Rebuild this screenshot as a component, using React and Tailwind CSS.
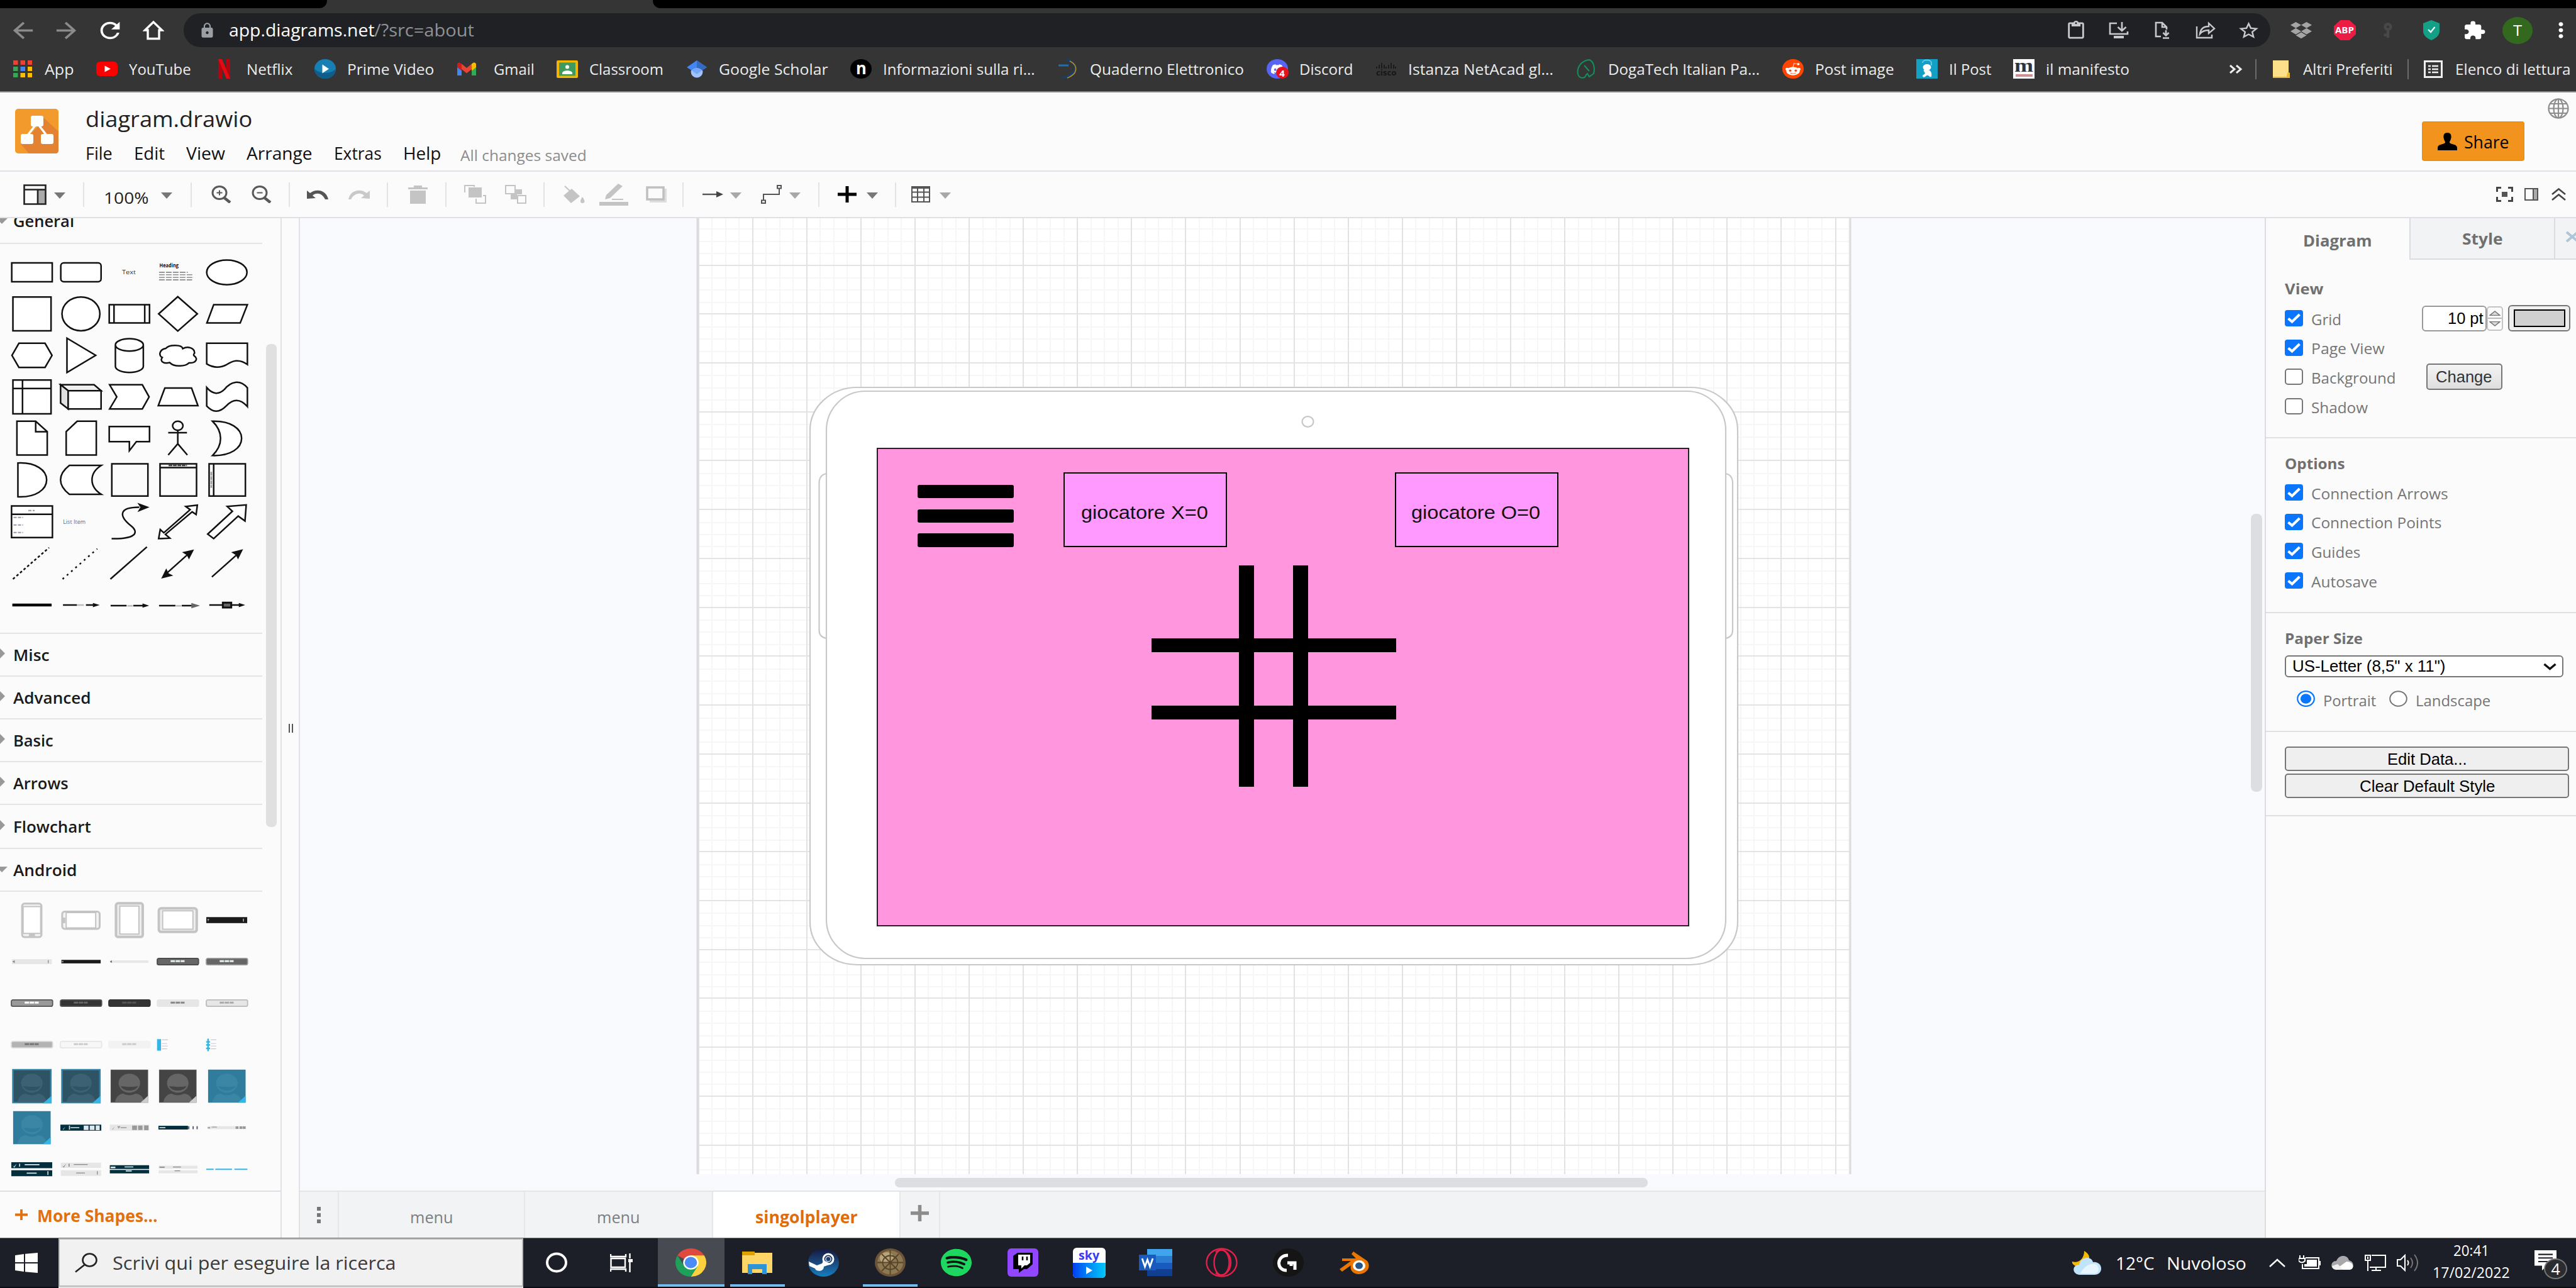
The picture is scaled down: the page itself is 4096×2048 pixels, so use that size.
import React, { useLayoutEffect, useRef, useState } from "react";
import { FaDiscord, FaRedditAlien, FaSpotify, FaDropbox } from "react-icons/fa";
import {
  MdArrowBack, MdArrowForward, MdRefresh, MdLock, MdStarOutline, MdExtension, MdMoreVert,
  MdOutlineContentPaste, MdVpnKey,
} from "react-icons/md";

/* Single line of text stretched horizontally to an exact width. */
function T({ w, children, className = "" }) {
  const ref = useRef(null);
  const [k, setK] = useState(1);
  useLayoutEffect(() => {
    setK(w / ref.current.offsetWidth);
  }, [w, children]);
  return (
    <span className={"block shrink-0 whitespace-nowrap " + className} style={{ width: w }}>
      <span ref={ref} className="inline-block origin-left" style={{ transform: `scaleX(${k})` }}>
        {children}
      </span>
    </span>
  );
}

const Svg = ({ box = "0 0 24 24", className, children, ...r }) => (
  <svg viewBox={box} preserveAspectRatio="none" fill="none" className={"shrink-0 " + className} {...r}>
    {children}
  </svg>
);

/* ------------------------------ browser chrome ------------------------------ */

const Slot = ({ children }) => <div className="flex w-[68.75px] shrink-0 items-center justify-center">{children}</div>;

function AddressBar() {
  return (
    <div className="flex h-[70px] shrink-0 items-center">
      <div className="flex w-[292px] shrink-0 items-center pl-[2px] text-white">
        <div className="flex w-[69px] justify-center"><MdArrowBack preserveAspectRatio="none" className="h-[41px] w-[47px] text-[#8b8b8b]" /></div>
        <div className="flex w-[69px] justify-center"><MdArrowForward preserveAspectRatio="none" className="h-[41px] w-[47px] text-[#8b8b8b]" /></div>
        <div className="flex w-[69px] justify-center"><MdRefresh preserveAspectRatio="none" className="h-[41px] w-[46px]" /></div>
        <div className="flex w-[69px] justify-center">
          <Svg className="h-[32px] w-[34px]" box="0 0 34 32"><path d="M17 3 L3.5 16 H8 V29.5 H26 V16 H30.5 Z" stroke="#fff" strokeWidth="3.4" /></Svg>
        </div>
      </div>
      <div className="flex h-[54px] w-[3318px] shrink-0 items-center rounded-[27px] bg-[#202124] pl-[24px]">
        <MdLock preserveAspectRatio="none" className="h-[27px] w-[27px] shrink-0 text-[#9aa0a6]" />
        <T w={231} className="ml-[21px] text-[27px] leading-[40px] text-white">app.diagrams.net</T>
        <T w={159} className="text-[27px] leading-[40px] text-[#8f9296]">/?src=about</T>
        <div className="ml-auto flex text-[#c7c9cc]">
          <Slot><MdOutlineContentPaste preserveAspectRatio="none" className="h-[31px] w-[34px]" /></Slot>
          <Slot>
            <Svg className="h-[28px] w-[34px]" box="0 0 34 28" stroke="currentColor" strokeWidth="2.6">
              <path d="M14 3 H3 V20 H31 V16 M22 1 V14 M15.5 9 L22 15 L28.500 9" /><path d="M9 23 H25 V27 H9Z" fill="currentColor" stroke="none" />
            </Svg>
          </Slot>
          <Slot>
            <Svg className="h-[28px] w-[28px]" box="0 0 28 28" stroke="currentColor" strokeWidth="2.6">
              <path d="M12 24 H4 V2 H14 L21 9 V13 M14 2 V9 H21 M20 14 V22 M15.500 18 L20 22.500 L24.500 18 M15 26.500 H25" />
            </Svg>
          </Slot>
          <Slot>
            <Svg className="h-[28px] w-[34px]" box="0 0 34 28" stroke="currentColor" strokeWidth="2.4">
              <path d="M3 8 V26 H27 V21 M8 20 C9 12 14 8 22 8 V3 L31 11.500 L22 19 V14 C15 14 11 16 8 20Z" />
            </Svg>
          </Slot>
          <Slot><MdStarOutline preserveAspectRatio="none" className="h-[33px] w-[37px]" /></Slot>
        </div>
      </div>
      <div className="ml-[15px] flex shrink-0 items-center">
        <Slot><FaDropbox preserveAspectRatio="none" className="h-[30px] w-[34px] text-[#a5a5a5]" /></Slot>
        <Slot>
          <div className="relative flex h-[32px] w-[35px] items-center justify-center">
            <Svg className="absolute inset-0 h-full w-full" box="0 0 34 32"><path d="M10 0 H24 L34 9.500 V22.500 L24 32 H10 L0 22.500 V9.500Z" fill="#ed1c45" /></Svg>
            <T w={30} className="relative text-[14px] font-bold leading-[20px] text-white">ABP</T>
          </div>
        </Slot>
        <Slot><MdVpnKey className="h-[26px] w-[26px] rotate-90 text-[#484848]" /></Slot>
        <Slot>
          <Svg className="h-[32px] w-[26px]" box="0 0 26 32"><path d="M13 0 L26 5 V18 C26 25 18 30 13 32 C8 30 0 25 0 18 V5Z" fill="#14a087" /><path d="M8 15 l4 4 l6.500 -8" stroke="#fff" strokeWidth="2.200" /></Svg>
        </Slot>
        <Slot><MdExtension preserveAspectRatio="none" className="h-[33px] w-[37px] text-white" /></Slot>
        <Slot>
          <div className="flex h-[43px] w-[48px] items-center justify-center rounded-[50%] bg-[#33691e]"><T w={14} className="text-[24px] leading-[30px] text-white">T</T></div>
        </Slot>
        <Slot><MdMoreVert preserveAspectRatio="none" className="h-[38px] w-[42px] text-white" /></Slot>
      </div>
    </div>
  );
}

const I = "h-[31px] w-[34px]";
const icons = {
  apps: (
    <Svg className="h-[27px] w-[30px]" box="0 0 30 27">
      {["#ea4335", "#ea4335", "#ea4335", "#34a853", "#4285f4", "#fbbc05", "#34a853", "#fbbc05", "#fbbc05"].map((c, i) => (
        <rect key={i} x={(i % 3) * 11.5} y={Math.floor(i / 3) * 10} width="7.500" height="7" fill={c} />
      ))}
    </Svg>
  ),
  yt: <Svg className="h-[23px] w-[34px]" box="0 0 34 23"><rect width="34" height="23" rx="6" fill="#f00" /><path d="M13.500 6.500 L23 11.500 L13.500 16.500Z" fill="#fff" /></Svg>,
  netflix: <Svg className="h-[31px] w-[19px]" box="0 0 19 31"><path d="M0 0H6V31H0ZM13 0H19V31H13Z" fill="#b1060f" /><path d="M0 0H6L19 31H13Z" fill="#e50914" /></Svg>,
  prime: <Svg className={I} box="0 0 34 31"><ellipse cx="17" cy="15.500" rx="17" ry="15.500" fill="#1680b5" /><path d="M0 15.500 A17 15.500 0 0 0 34 15.500 C26 24 8 24 0 15.500Z" fill="#0f5d8a" /><path d="M12.500 8.500 L23 15.500 L12.500 22.500Z" fill="#fff" /></Svg>,
  gmail: <Svg className="h-[21px] w-[30px]" box="0 0 30 21"><path d="M0 3V21H7V9Z" fill="#4285f4" /><path d="M30 3V21H23V9Z" fill="#34a853" /><path d="M23 2.500 L26 0.500 Q30 0 30 4 V8 L23 13.500Z" fill="#fbbc04" /><path d="M7 2.500 L4 0.500 Q0 0 0 4 V8 L7 13.500Z" fill="#c5221f" /><path d="M7 2.500 L15 9 L23 2.500 V11 L15 17.500 L7 11Z" fill="#ea4335" /></Svg>,
  classroom: <Svg className="h-[28px] w-[34px]" box="0 0 34 28"><rect width="34" height="28" rx="2" fill="#f4b400" /><rect x="4" y="3.500" width="26" height="21" fill="#3f9b5b" /><circle cx="17" cy="10.500" r="3" fill="#fff" /><path d="M9 20 C10 15 24 15 25 20 V22 H9Z" fill="#fff" /></Svg>,
  scholar: <Svg className={I} box="0 0 34 31"><circle cx="17" cy="20" r="9.500" fill="#a0c3ff" /><path d="M17 2 L33 13 L25 18 C22 13 12 13 9 18 L1 13Z" fill="#4285f4" /><path d="M17 2 L33 13 L25 18 C23 15 20 14 17 14Z" fill="#356ac3" /><path d="M9 18 C12 13 22 13 25 18 L17 24Z" fill="#76a7fa" /></Svg>,
  nn: (
    <div className={"flex items-center justify-center rounded-[50%] bg-black " + I}><T w={17} className="-mt-[4px] text-[27px] font-bold leading-[28px] text-white">n</T></div>
  ),
  quad: <Svg className={I} box="0 0 34 31"><path d="M2 10 H18" stroke="#1f6fae" strokeWidth="3" /><path d="M14 1 C34 6 34 24 8 30" stroke="#1c3d66" strokeWidth="3.500" /><path d="M20 3 C35 11 32 24 16 30" stroke="#b08d2e" strokeWidth="1.600" /></Svg>,
  discord: (
    <div className={"relative flex items-center justify-center rounded-[50%] bg-[#5865f2] " + I}>
      <FaDiscord className="h-[20px] w-[22px] text-white" />
      <div className="absolute -right-[1px] bottom-0 flex h-[19px] w-[20px] items-center justify-center rounded-[50%] bg-[#e8101c]"><T w={9} className="text-[15px] font-bold leading-[18px] text-white">4</T></div>
    </div>
  ),
  cisco: (
    <div className="flex w-[34px] flex-col items-center">
      <Svg className="h-[12px] w-[32px]" box="0 0 32 12"><path d="M1 7v3M5 4v6M9 1v9M13 4v6M16 7v3M20 4v6M24 1v9M28 4v6M31 7v3" stroke="#161616" strokeWidth="1.600" /></Svg>
      <T w={32} className="text-[12px] font-bold leading-[10px] text-[#161616]">cisco</T>
    </div>
  ),
  doga: <Svg className={I} box="0 0 34 31"><path d="M22 1 C8 3 2 14 4 24 C6 31 15 32 17 25 L19 23 L22 28 L29 23 C31 16 30 4 22 1 M14 10 L22 19" stroke="#13915a" strokeWidth="2" /></Svg>,
  reddit: <div className={"flex items-center justify-center rounded-[50%] bg-[#ff4500] " + I}><FaRedditAlien preserveAspectRatio="none" className="h-[22px] w-[26px] text-white" /></div>,
  ilpost: <Svg className={I} box="0 0 34 31"><rect width="34" height="31" fill="#149fc5" /><path d="M10 6 C10 0 24 0 24 6 V10" stroke="#7fd0e6" strokeWidth="1.600" /><ellipse cx="17" cy="13" rx="6.500" ry="5" fill="#fff" /><path d="M12 17 C20 15 26 19 24 28 C20 30 20 22 14 28 C10 30 9 26 11 25 C18 22 10 20 12 17Z" fill="#fff" /></Svg>,
  manif: (
    <div className={"flex items-center justify-center bg-white " + I}><div className="flex flex-col items-center"><T w={30} className="-mt-[8px] font-['Liberation_Serif'] text-[30px] leading-[28px] font-bold text-[#333]">m</T><div className="h-[4px] w-[27px] bg-[#cf8f8f]" /></div></div>
  ),
};

const bookmarks = [
  ["apps", "App", 47], ["yt", "YouTube", 99], ["netflix", "Netflix", 73], ["prime", "Prime Video", 138],
  ["gmail", "Gmail", 65], ["classroom", "Classroom", 118], ["scholar", "Google Scholar", 174],
  ["nn", "Informazioni sulla ri...", 242], ["quad", "Quaderno Elettronico", 245], ["discord", "Discord", 86],
  ["cisco", "Istanza NetAcad gl...", 231], ["doga", "DogaTech Italian Pa...", 241], ["reddit", "Post image", 126],
  ["ilpost", "Il Post", 67], ["manif", "il manifesto", 133],
];

function Bookmarks() {
  const txt = "text-[23.5px] leading-[32px] text-[#ececec]";
  return (
    <div className="flex h-[53px] shrink-0 items-center pl-[19px]">
      <div className="flex shrink-0 items-center gap-[35.3px]">
        {bookmarks.map(([ic, label, w]) => (
          <div key={label} className={"flex shrink-0 items-center " + (ic === "gmail" ? "gap-[26px]" : "gap-[18px]")}>
            <div className="flex w-[34px] shrink-0 justify-center">{icons[ic]}</div>
            <T w={w} className={txt}>{label}</T>
          </div>
        ))}
      </div>
      <div className="ml-auto flex shrink-0 items-center">
        <Svg className="h-[14px] w-[21px]" box="0 0 21 14" stroke="#eee" strokeWidth="3"><path d="M1 1 L8 7 L1 13 M11 1 L18 7 L11 13" /></Svg>
        <div className="ml-[20px] h-[32px] w-[2px] bg-[#6b6b6b]" />
        <Svg className="ml-[26px] h-[28px] w-[27px]" box="0 0 27 28"><path d="M0 0H25V20H27V28H0Z" fill="#ffe08a" /><path d="M24 18 L27 20 V28 H21Z" fill="#e8bb2e" /><path d="M0 26H27V28H0Z" fill="#e0b840" /></Svg>
        <T w={143} className={"ml-[21px] " + txt}>Altri Preferiti</T>
        <div className="ml-[23px] h-[32px] w-[2px] bg-[#6b6b6b]" />
        <Svg className="ml-[24px] h-[28px] w-[30px]" box="0 0 30 28" stroke="#eee"><rect x="1.500" y="1.500" width="27" height="25" strokeWidth="3" /><path d="M7 9h4M13 9h10M7 14h4M13 14h10M7 19h4M13 19h10" strokeWidth="2.600" /></Svg>
        <T w={183} className={"ml-[20px] mr-[9px] " + txt}>Elenco di lettura</T>
      </div>
    </div>
  );
}

function Browser() {
  return (
    <div className="flex h-[147px] shrink-0 flex-col border-b-2 border-[#8a8a8a] bg-[#353535]">
      <div className="flex h-[13px] shrink-0 justify-between">
        <div className="w-[520px] rounded-br-[12px] bg-black" />
        <div className="w-[3058px] rounded-bl-[12px] bg-black" />
      </div>
      <AddressBar />
      <Bookmarks />
    </div>
  );
}

/* ------------------------------ app header + toolbar ------------------------------ */

function Header() {
  const m = "text-[27px] leading-[36px] text-[#111]";
  return (
    <div className="flex h-[126px] shrink-0 border-b-2 border-[#dfe0e6] bg-[#fbfbfb]">
      <Svg className="ml-[24px] mt-[26px] h-[71px] w-[69px]" box="0 0 69 71">
        <rect width="69" height="71" rx="5" fill="#f29a2c" />
        <path d="M43 12 L69 36 V66 Q69 71 64 71 H22 L9 56 L35 30Z" fill="#e38331" />
        <path d="M34 24 L20 42 M36 24 L50 42" stroke="#fff" strokeWidth="3.500" />
        <rect x="25" y="11" width="20" height="17" rx="3" fill="#fff" /><rect x="9" y="40" width="20" height="16" rx="3" fill="#fff" /><rect x="41" y="40" width="20" height="16" rx="3" fill="#fff" />
      </Svg>
      <div className="ml-[43px] flex flex-col">
        <T w={265} className="mt-[20px] text-[35px] leading-[44px] text-[#222]">diagram.drawio</T>
        <div className="mt-[15px] flex gap-[34px]">
          <T w={43} className={m}>File</T>
          <T w={49} className={m}>Edit</T>
          <T w={62} className={m}>View</T>
          <T w={105} className={m}>Arrange</T>
          <T w={76} className={m}>Extras</T>
          <T w={60} className={m}>Help</T>
          <T w={201} className="-ml-[3px] mt-[3px] text-[23.5px] leading-[36px] text-[#8c8c8c]">All changes saved</T>
        </div>
      </div>
      <div className="ml-auto flex">
        <div className="mt-[46px] flex h-[63px] w-[163px] items-center rounded-[4px] border-2 border-[#ee8f12] bg-[#f2931e] pl-[23px]">
          <Svg className="h-[28px] w-[31px]" box="0 0 31 28"><path d="M15.500 0 C21 0 22 4 21.500 8 C21 12 19 13 19 16 C22 19 31 18 31 24 V28 H0 V24 C0 18 9 19 12 16 C12 13 10 12 9.500 8 C9 4 10 0 15.500 0Z" fill="#000" /></Svg>
          <T w={72} className="ml-[11px] mt-[2px] text-[27px] font-medium leading-[36px] text-black">Share</T>
        </div>
        <Svg className="ml-[37px] mr-[11px] mt-[9px] h-[33px] w-[34px]" box="0 0 34 33" stroke="#8d8d8d" strokeWidth="2.200">
          <ellipse cx="17" cy="16.500" rx="15.500" ry="15" /><ellipse cx="17" cy="16.500" rx="7.500" ry="15" /><path d="M17 1V32M2 16.500H32M4 9H30M4 24H30" />
        </Svg>
      </div>
    </div>
  );
}

const Sep = ({ className }) => <div className={"h-[39px] w-[2px] shrink-0 bg-[#e3e3e3] " + className} />;
const Caret = ({ className = "", c = "#777" }) => <Svg className={"h-[10px] w-[18px] " + className} box="0 0 18 10"><path d="M0 0H18L9 10Z" fill={c} /></Svg>;

function Zoom({ plus, className }) {
  return (
    <Svg className={"h-[28px] w-[32px] " + className} box="0 0 32 28" stroke="#595959">
      <ellipse cx="13" cy="11.500" rx="11" ry="10" strokeWidth="3" />
      <path d={plus ? "M8.500 11.500H17.500M13 7.500V15.500" : "M8.500 11.500H17.500"} strokeWidth="2" />
      <path d="M20 19L30 27" strokeWidth="4.500" />
    </Svg>
  );
}

function Toolbar() {
  return (
    <div className="flex h-[74px] shrink-0 items-center border-b-2 border-[#dfe0e6] bg-[#fbfbfb]">
      <Svg className="ml-[37px] h-[33px] w-[37px]" box="0 0 37 33"><path d="M24 9H35V31H24Z" fill="#aaa" /><path d="M1.500 1.500H35.500V31.500H1.500ZM1.500 8.500H35.500M23 9V31" stroke="#222" strokeWidth="2.600" /></Svg>
      <Caret className="ml-[12px] mt-[4px]" />
      <Sep className="ml-[28px]" />
      <T w={72} className="ml-[31px] mt-[9px] text-[25px] leading-[34px] text-[#222]">100%</T>
      <Caret className="ml-[19px] mt-[4px]" />
      <Sep className="ml-[29px]" />
      <Zoom plus className="ml-[31px]" />
      <Zoom className="ml-[32px]" />
      <Sep className="ml-[27px]" />
      <Svg className="ml-[27px] h-[17px] w-[34px]" box="0 0 34 17"><path d="M0 2V15L14 14L9 10C14 5 24 5 29 16H34C31 1 15 -2 5 6Z" fill="#555" /></Svg>
      <Svg className="ml-[32px] h-[17px] w-[34px]" box="0 0 34 17"><path d="M34 2V15L20 14L25 10C20 5 10 5 4 16H0C3 1 19 -2 29 6Z" fill="#c9c9c9" /></Svg>
      <Sep className="ml-[27px]" />
      <Svg className="ml-[32px] h-[29px] w-[31px]" box="0 0 31 29"><path d="M0 3H9V0H22V3H31V6H0ZM3 8H28V29H3Z" fill="#c4c4c4" /></Svg>
      <Sep className="ml-[28px]" />
      <Svg className="ml-[28px] h-[30px] w-[35px]" box="0 0 35 30"><rect x="7" y="4" width="21" height="16" fill="#c4c4c4" /><path d="M1 12V1H16V3M30 17H34V29H19V22" stroke="#c4c4c4" strokeWidth="2" /></Svg>
      <Svg className="ml-[30px] h-[30px] w-[35px]" box="0 0 35 30"><path d="M1 1H16V14H1ZM20 17H33V29H20Z" stroke="#c4c4c4" strokeWidth="2" /><path d="M17 7H27V15H17ZM9 15H19V23H9Z" fill="#c4c4c4" /></Svg>
      <Sep className="ml-[26px]" />
      <Svg className="ml-[29px] h-[29px] w-[35px]" box="0 0 35 29"><path d="M3 1L16 13" stroke="#c4c4c4" strokeWidth="2" /><path d="M14 5L27 17L13 28L1 16Z M31 18C36 25 35 28 31 28C27 28 27 24 31 18Z" fill="#c4c4c4" /></Svg>
      <Svg className="ml-[23px] h-[35px] w-[46px]" box="0 0 46 35"><path d="M9 25L11 18L30 0L37 4L17 23ZM0 29H46V35H0ZM20 24H38V26H20Z" fill="#c4c4c4" /></Svg>
      <Svg className="ml-[28px] h-[26px] w-[33px]" box="0 0 33 26"><path d="M6 4H33V26H6Z" fill="#ddd" /><path d="M2 2H28V21H2Z" stroke="#c0c0c0" strokeWidth="3.500" fill="#fbfbfb" /></Svg>
      <Sep className="ml-[25px]" />
      <Svg className="ml-[30px] h-[12px] w-[33px]" box="0 0 33 12"><path d="M0 6H25" stroke="#555" strokeWidth="2.400" /><path d="M22 1L33 6L22 11Z" fill="#444" /></Svg>
      <Caret className="ml-[11px] mt-[4px]" c="#a8a8a8" />
      <Svg className="ml-[31px] h-[30px] w-[33px]" box="0 0 33 30" stroke="#555" strokeWidth="2"><path d="M4 24V15H29V6M1 24.500H7V29H1ZM26 1H32V5.500H26Z" /></Svg>
      <Caret className="ml-[12px] mt-[4px]" c="#a8a8a8" />
      <Sep className="ml-[28px]" />
      <Svg className="ml-[29px] h-[26px] w-[30px]" box="0 0 30 26"><path d="M15 0V26M0 13H30" stroke="#000" strokeWidth="5" /></Svg>
      <Caret className="ml-[16px] mt-[4px]" />
      <Sep className="ml-[27px]" />
      <Svg className="ml-[24px] h-[26px] w-[30px]" box="0 0 30 26" stroke="#555" strokeWidth="2"><path d="M1 1H29V25H1ZM1 3H29M1 9.500H29M1 17.500H29M10 1V25M20 1V25" /></Svg>
      <Caret className="ml-[15px] mt-[4px]" c="#a8a8a8" />
      <div className="ml-auto mr-[16px] flex items-center">
        <Svg className="h-[24px] w-[27px]" box="0 0 27 24" stroke="#444" strokeWidth="3"><path d="M1.500 8V1.500H8M19 1.500H25.500V8M25.500 16V22.500H19M8 22.500H1.500V16" /><rect x="9" y="8" width="9" height="8" fill="#555" stroke="none" /></Svg>
        <Svg className="ml-[18px] h-[20px] w-[22px]" box="0 0 22 20"><path d="M14 1H21V19H14Z" fill="#aaa" /><path d="M1 1H21V19H1ZM14 1V19" stroke="#555" strokeWidth="2" /></Svg>
        <Svg className="ml-[21px] h-[20px] w-[23px]" box="0 0 23 20" stroke="#444" strokeWidth="2.600"><path d="M1 10L11.500 1.500L22 10M1 19L11.500 10.500L22 19" /></Svg>
      </div>
    </div>
  );
}

/* ------------------------------ sidebar ------------------------------ */

const Poly = ({ p, f = "#fff", ...r }) => <polygon points={p} fill={f} vectorEffect="non-scaling-stroke" {...r} />;
const P = ({ d, f = "none", ...r }) => <path d={d} fill={f} vectorEffect="non-scaling-stroke" {...r} />;
const mini = { stroke: "none", fontFamily: "Open Sans" };

const general = [
  <P d="M-101 -35H102V35H-101Z" f="#fff" />,
  <rect x="-101" y="-35" width="202" height="70" rx="15" ry="11" fill="#fff" vectorEffect="non-scaling-stroke" />,
  <text x="-37" y="6" fontSize="20" textLength="69" lengthAdjust="spacingAndGlyphs" fill="#334" {...mini}>Text</text>,
  <g><text x="-92" y="-20" fontSize="20" fontWeight="bold" textLength="96" lengthAdjust="spacingAndGlyphs" fill="#112" {...mini}>Heading</text><P d="M-94 0H50M-94 9H78M-94 19H80M-94 28H72" stroke="#777" strokeWidth="1.400" strokeDasharray="9 2" /></g>,
  <P d="M-101 0A101 46 0 1 1 101 0A101 46 0 1 1 -101 0Z" f="#fff" />,
  <P d="M-95 -63H96V63H-95Z" f="#fff" />,
  <P d="M-95 0A95 63 0 1 1 95 0A95 63 0 1 1 -95 0Z" f="#fff" />,
  <P d="M-101 -34H101V34H-101ZM-77 -34V34M77 -34V34" f="#fff" />,
  <Poly p="0,-64 98,0 0,64 -96,0" />,
  <Poly p="-100,34 -66,-34 103,-34 67,34" />,
  <Poly p="-100,0 -65,-45 66,-45 101,0 66,45 -65,45" />,
  <Poly p="-70,-64 74,0 -70,64" />,
  <P d="M-70 -39A70 23 0 0 1 70 -39V41A70 23 0 0 1 -70 41ZM-70 -39A70 23 0 0 0 70 -39" f="#fff" />,
  <P d="M-60 -26C-45 -40 20 -42 25 -25C50 -36 85 -28 84 -8C78 -4 78 0 84 3C104 14 88 30 56 28C40 42 -20 44 -40 27C-70 33 -92 22 -78 8C-98 0 -92 -22 -60 -26Z" f="#fff" />,
  <P d="M-101 -45H103V34C60 10 25 22 0 34C-35 48 -70 46 -101 32Z" f="#fff" />,
  <P d="M-95 -63H96V63H-95ZM-95 -31H96M-47 -63V63" f="#fff" />,
  <g><Poly p="-102,-45 66,-45 101,-23 -64,-23" f="#f0f0f0" /><Poly p="-102,-45 -64,-23 -64,45 -102,23" f="#e0e0e0" /><P d="M-64 -23H101V45H-64Z" f="#fff" /></g>,
  <Poly p="-99,-45 65,-45 99,0 65,45 -99,45 -63,0" />,
  <Poly p="-98,33 -65,-33 69,-33 101,33" />,
  <P d="M-101 -35C-70 -8 -40 -8 -12 -28C20 -58 65 -66 103 -34V36C65 4 30 8 -2 33C-40 62 -70 58 -101 34Z" f="#fff" />,
  <P d="M-75 -64H19L77 -25V62H-75ZM19 -64V-25H77" f="#fff" />,
  <Poly p="-19,-64 77,-64 77,62 -74,62 -74,-25" />,
  <Poly p="-101,-44 101,-44 101,12 35,12 0,46 0,12 -101,12" />,
  <P d="M-26 -47A26 17 0 1 1 26 -47A26 17 0 1 1 -26 -47ZM0 -30V20M-48 -21H46M0 20L-48 62M0 20L48 62" />,
  <P d="M-72 -64C20 -66 74 -36 74 0S20 66 -72 64C-18 25 -18 -25 -72 -64Z" f="#fff" />,
  <P d="M-70 -63C20 -66 74 -36 74 0S20 66 -70 63Z" f="#fff" />,
  <P d="M-58 -54H102C40 -25 40 25 102 54H-58C-117 20 -117 -20 -58 -54Z" f="#fff" />,
  <P d="M-88 -60H93V60H-88Z" />,
  <g><P d="M-89 -60H94V60H-89ZM-89 -46H94" /><P d="M-46 -54H46" stroke="#444" strokeDasharray="6 1" /></g>,
  <g><P d="M-89 -60H93V60H-89ZM-66 -60V60" /><P d="M-78 -30V30" stroke="#999" strokeDasharray="6 1" /></g>,
  <g><P d="M-102 -60H103V58H-102Z" f="#fff" /><P d="M-102 -29H103" /><P d="M-18 -43H14M-92 -17H-44M-92 11H-44M-92 39H-44" stroke="#99a" strokeWidth="2" strokeDasharray="5 2" /></g>,
  <text x="-90" y="7" fontSize="20" textLength="113" lengthAdjust="spacingAndGlyphs" fill="#667" {...mini}>List Item</text>,
  <g><P d="M-89 62C30 64 50 40 10 15C-50 -20 -60 -55 50 -55" /><Poly p="50,-66 90,-55 50,-43 60,-55" f="#111" /></g>,
  <Poly p="98,-63 92,-28 72,-38 -62,46 -40,60 -96,62 -88,28 -70,40 62,-46 40,-58" />,
  <Poly p="97,-64 91,-4 57,-22 -66,62 -96,45 28,-40 2,-58" />,
  <P d="M-95 58L86 -59" strokeDasharray="4 3.500" />,
  <P d="M-92 58L82 -55" strokeDasharray="3 6" />,
  <P d="M-95 58L88 -62" />,
  <g><P d="M-70 46L62 -42" /><Poly p="-76,52 -58,25 -50,38 -34,44" f="#111" /><Poly p="74,-48 56,-22 48,-34 32,-41" f="#111" /></g>,
  <g><P d="M-75 50L64 -42" /><Poly p="74,-49 56,-22 48,-34 32,-41" f="#111" /></g>,
  <P d="M-98 0H99" strokeWidth="4.500" stroke="#000" />,
  <g><P d="M-90 0H-20M25 0H70" /><P d="M-18 0H15" stroke="#bbb" /><Poly p="60,-8 94,0 60,8" f="#111" stroke="none" /></g>,
  <g><P d="M-94 2H-14M20 2H70" /><P d="M-10 3H18" stroke="#bbb" /><Poly p="66,-6 99,2 66,10" f="#111" stroke="none" /></g>,
  <g><P d="M-94 2H-12M20 2H90" /><P d="M-10 3H18" stroke="#bbb" /><Poly p="72,-4 98,2 72,8" f="#666" stroke="#666" /></g>,
  <g><P d="M-88 0H-20M22 0H70" /><P d="M-20 -9H22V9H-20Z" f="#666" strokeWidth="3" /><Poly p="60,-8 92,0 60,8" f="#111" stroke="none" /></g>,
];

const bar = (x, w, h, fill, extra) => <g stroke="none"><rect x={x} y={-h / 2} width={w} height={h} fill={fill} />{extra}</g>;
const pill = (fill, stroke, txt) => (
  <g><rect x="-103" y="-13" width="207" height="26" rx="8" ry="6" fill={fill} stroke={stroke} strokeWidth="1.800" vectorEffect="non-scaling-stroke" /><P d="M-36 -2H34" stroke={txt} strokeWidth="3" strokeDasharray="7 1" /></g>
);
const avatar = (bg, fg, edge, corner, s) => (
  <g stroke="none">
    <rect x={-94 - s} y={-66 - s / 2} width={188 + 2 * s} height={132 + s} fill={edge} />
    <rect x="-91" y="-63" width="182" height="126" fill={bg} />
    <path d="M-54 -12A54 38 0 0 1 54 -12A54 38 0 0 1 -54 -12ZM-44 0A48 30 0 0 0 44 0C20 4 -20 4 -44 0Z" fill={fg} fillRule="evenodd" />
    <path d="M-72 64C-68 38 -40 28 -30 30C-15 38 15 38 30 30C50 30 70 40 74 64Z" fill={fg} />
    <path d={`M${94 + s} 38V${66 + s / 2}H56Z`} fill={corner} />
  </g>
);
const G = "#c4c4c4";
const android = [
  <g stroke={G} strokeWidth="3"><rect x="-49" y="-66" width="97" height="134" rx="12" ry="10" vectorEffect="non-scaling-stroke" fill="#f3f3f3" /><P d="M-44 -54H44V53H-44Z" f="#fff" strokeWidth="2" /><P d="M-15 60H15" strokeWidth="4" /></g>,
  <g stroke={G} strokeWidth="3"><rect x="-94" y="-34" width="188" height="69" rx="12" ry="10" vectorEffect="non-scaling-stroke" fill="#f3f3f3" /><P d="M-74 -30H74V31H-74Z" f="#fff" strokeWidth="2" /><P d="M-85 -10V12" strokeWidth="4" /></g>,
  <g stroke={G} strokeWidth="4"><rect x="-67" y="-67" width="134" height="134" rx="10" ry="8" vectorEffect="non-scaling-stroke" fill="#eee" /><P d="M-48 -56H48V56H-48Z" f="#fff" strokeWidth="2" /></g>,
  <g stroke={G} strokeWidth="4"><rect x="-95" y="-47" width="190" height="94" rx="12" ry="9" vectorEffect="non-scaling-stroke" fill="#eee" /><P d="M-76 -37H76V36H-76Z" f="#fff" strokeWidth="2" /></g>,
  bar(-103, 205, 24, "#1a1a1a", <path d="M-98 -5L-88 -5L-94 6ZM80 -6H86V6H80Z" fill="#999" />),
  bar(-100, 200, 20, "#e6e6e6", <path d="M-98 0L-86 -6V6ZM80 -6H84V6H80Z" fill="#888" />),
  bar(-98, 197, 14, "#1a1a1a", <path d="M-96 -3H-88V3H-96Z" fill="#888" />),
  bar(-96, 192, 10, "#e8e8e8", <path d="M-98 0L-88 -5V5Z" fill="#666" />),
  pill("#666", "#4a4a4a", "#e6eef2"), pill("#666", "#999", "#e6eef2"),
  pill("#999", "#555", "#fff"), pill("#333", "#555", "#666"), pill("#333", "#333", "#555"), pill("#e6e6e6", "#e6e6e6", "#888"), pill("#e6e6e6", "#bbb", "#aaa"),
  pill("#b3b3b3", "#ddd", "#777"), pill("#f7f7f7", "#e6e6e6", "#ccc"), pill("#f2f2f2", "#f2f2f2", "#ccc"),
  <g stroke="none"><rect x="-104" y="-22" width="20" height="46" fill="#33b5e5" /><path d="M-80 -21h30v3h-30ZM-80 -6h26v3h-26ZM-80 4h30v3h-30ZM-80 15h26v3h-26Z" fill="#c9c4e6" /></g>,
  <g stroke="none"><path d="M-98 -24h8v50h-8ZM-104 -14h20v6h-20ZM-104 -2h20v6h-20ZM-104 12h20v6h-20Z" fill="#33b5e5" /><path d="M-80 -21h28v3h-28ZM-80 -6h26v3h-26ZM-80 4h28v3h-28ZM-80 15h26v3h-26Z" fill="#c9c4e6" /></g>,
  avatar("#2e5364", "#3b6172", "#2f84a8", "#33b5e5", 5), avatar("#2e5364", "#3b6172", "#2f84a8", "#33b5e5", 5),
  avatar("#444", "#666", "#555", "#ccc", 0), avatar("#444", "#666", "#555", "#ccc", 0), avatar("#2f7c9c", "#3b86a5", "#2f7c9c", "#33b5e5", 0),
  avatar("#2f7c9c", "#3b86a5", "#2f7c9c", "#33b5e5", 0),
  bar(-103, 205, 24, "#022e3e", <path d="M-98 0l8 6l12 -10l-10 12ZM-60 -8h5v16h-5ZM-52 -2h44v4h-44ZM14 -8h24v17h-24ZM44 -8h24v17h-24ZM74 -9h20v19h-20Z" fill="#dfe8ea" />),
  bar(-98, 197, 24, "#e6e6e6", <path d="M-94 0l8 6l14 -12l-12 14ZM-60 -6h16l-10 10ZM-44 -2h30v4h-30ZM14 -8h24v17h-24ZM44 -8h22v17h-22ZM74 -9h22v19h-22Z" fill="#999" />),
  bar(-97, 148, 15, "#022e3e", <><path d="M-92 -2h30v4h-30Z" fill="#dfe8ea" /><path d="M52 -6h6v12h-6ZM74 -6h6v12h-6ZM94 -6h6v12h-6Z" fill="#557" /></>),
  bar(-96, 192, 12, "#e6e6e6", <path d="M-96 -2h12v5h-12ZM-76 -4h26v3h-26ZM44 -5h14v10h-14ZM64 -5h14v10h-14ZM80 -5h14v10h-14Z" fill="#999" />),
  <g stroke="none"><path d="M-103 -28H102V-4H-103ZM-103 4H102V28H-103Z" fill="#022e3e" /><path d="M-98 -16l8 6l14 -12l-12 16ZM-64 -22h5v12h-5ZM-36 -20h74v4h-74ZM-26 14h50v4h-50ZM78 8h5v15h-5Z" fill="#dfe8ea" /></g>,
  <g stroke="none"><path d="M-101 -26H101V-5H-101ZM-101 4H101V27H-101Z" fill="#e6e6e6" /><path d="M-96 -16l8 6l14 -12l-12 16ZM-62 -22h5v12h-5ZM-36 -20h70v3h-70ZM-24 14h44v3h-44ZM80 8h4v14h-4Z" fill="#888" /></g>,
  <g stroke="none"><path d="M-98 -16H99V-1H-98ZM-98 3H99V17H-98Z" fill="#022e3e" /><path d="M-94 -10h24v6h-24ZM-24 -11h44v4h-44ZM-18 5h30v4h-30Z" fill="#dfe8ea" /></g>,
  <g stroke="none"><path d="M-96 -14H99V-2H-96ZM-96 4H99V16H-96Z" fill="#e6e6e6" /><path d="M-92 -10h26v4h-26ZM-24 -10h40v3h-40ZM-16 5h28v3h-28Z" fill="#888" /></g>,
  <g stroke="none"><path d="M-103 -2H-66V3H-103ZM-58 -2H26V3H-58ZM38 -2H103V3H38Z" fill="#33b5e5" /></g>,
];

function Grid({ items, box }) {
  return (
    <div className="mt-[12px] grid auto-rows-[66.1px] grid-cols-[repeat(5,77.4px)] pl-[12.3px]">
      {items.map((s, i) => (
        <svg key={i} viewBox={box} preserveAspectRatio="none" className="h-full w-full" stroke="#111" strokeWidth="2.500" fill="#fff">
          {s}
        </svg>
      ))}
    </div>
  );
}

function Section({ label, w, open, className = "h-[68px]" }) {
  return (
    <div className={"flex shrink-0 items-center border-b-2 border-[#e5e5e5] " + className}>
      <div className="w-[21px]">
        {open ? <Svg className="-ml-[6px] h-[9px] w-[18px]" box="0 0 18 9"><path d="M0 0H18L9 9Z" fill="#999" /></Svg> : <Svg className="-mt-[4px] h-[18px] w-[8px]" box="0 0 8 18"><path d="M0 1L8 9L0 17Z" fill="#999" /></Svg>}
      </div>
      <T w={w} className="text-[25.5px] font-semibold leading-[40px] text-[#1a1a1a]">{label}</T>
    </div>
  );
}

function Sidebar() {
  return (
    <div className="flex w-[448px] shrink-0 flex-col border-r-2 border-[#e2e2e6] bg-[#fbfbfb]">
      <div className="flex h-[1546px] overflow-hidden">
        <div className="flex w-[417px] shrink-0 flex-col">
          <Section label="General" w={97} open className="-mt-[31px] h-[72px]" />
          <Grid items={general} box="-122 -77.5 244 155" />
          <div className="mt-[11px] h-[2px] shrink-0 bg-[#e5e5e5]" />
          <Section label="Misc" w={58} />
          <Section label="Advanced" w={124} />
          <Section label="Basic" w={64} />
          <Section label="Arrows" w={88} />
          <Section label="Flowchart" w={124} className="h-[70px]" />
          <Section label="Android" w={102} open />
          <Grid items={android} box="-122 -83 244 166" />
        </div>
        <div className="ml-[6px] mt-[200px] h-[768px] w-[17px] rounded-[7px] bg-[#e0e0e0]" />
      </div>
      <div className="flex h-[75px] items-center border-t-2 border-[#dfe0e6] pl-[24px] font-bold text-[#e07010]">
        <Svg className="h-[17px] w-[20px]" box="0 0 20 17"><path d="M10 0V17M0 8.500H20" stroke="#e07010" strokeWidth="3.800" /></Svg>
        <T w={192} className="ml-[15px] mt-[2px] text-[26px] leading-[36px]">More Shapes...</T>
      </div>
    </div>
  );
}

/* ------------------------------ canvas ------------------------------ */

const lines = (from, step, to) => Array.from({ length: Math.floor((to - from) / step) + 1 }, (_, i) => from + i * step);

function Canvas() {
  const xs = lines(1110.6, 21.523, 2942);
  const ys = lines(363.3, 19.43, 1867);
  const node = "absolute flex items-center justify-center border-2 border-black bg-[#ff99ff] font-['Liberation_Sans'] text-[29.500px] leading-[34px] text-[#111]";
  return (
    <div className="relative h-[1546px] overflow-hidden bg-[#f8fafd]">
      <svg className="absolute inset-0 h-full w-full" viewBox="477 347 3124 1546" fill="none">
        <rect x="1109" y="347" width="1833" height="1520" fill="#fff" />
        <g shapeRendering="crispEdges">
          {ys.map((y, i) => (i % 4 !== 3 ? <rect key={i} x="1109" y={y} width="1833" height="2" fill="#f6f6f6" /> : null))}
          {xs.map((x, i) => (i % 4 ? <rect key={i} x={x - 1} y="347" width="2" height="1520" fill="#f6f6f6" /> : null))}
          {ys.map((y, i) => (i % 4 === 3 ? <rect key={i} x="1109" y={y - 1} width="1833" height="2" fill="#e4e4e4" /> : null))}
          {xs.map((x, i) => (i % 4 ? null : <rect key={i} x={x - 1} y="347" width="2" height="1520" fill="#e2e2e2" />))}
        </g>
        <path d="M1109 347V1867M2942 347V1867" stroke="#dcdcdc" strokeWidth="3" />
        <g stroke="#c8c8c8" strokeWidth="2.200">
          <rect x="1288" y="616" width="1475" height="918" rx="75" ry="68" fill="#fff" />
          <rect x="1314" y="622" width="1430" height="902" rx="62" ry="62" fill="#fff" />
          <path d="M1314 753Q1302.500 755 1302.500 768V1002Q1302.500 1013 1314 1015M2744 753Q2755 755 2755 768V1002Q2755 1013 2744 1015" />
          <ellipse cx="2079.500" cy="670.500" rx="9" ry="8.300" />
        </g>
      </svg>
      <div className="absolute left-[917px] top-[365px] h-[761px] w-[1292px] border-2 border-[#222] bg-[#ff96de]" />
      <div className="absolute left-[981.500px] top-[424px] h-[21px] w-[153px] rounded-[3px] bg-black" />
      <div className="absolute left-[981.500px] top-[463px] h-[21px] w-[153px] rounded-[3px] bg-black" />
      <div className="absolute left-[981.500px] top-[501px] h-[22px] w-[153px] rounded-[3px] bg-black" />
      <div className={node + " left-[1214px] top-[404px] h-[119px] w-[260px]"}><T w={202} className="-ml-[3px] mt-[9px]">giocatore X=0</T></div>
      <div className={node + " left-[1741px] top-[404px] h-[119px] w-[260px]"}><T w={205} className="-ml-[3px] mt-[9px]">giocatore O=0</T></div>
      <div className="absolute left-[1493px] top-[552px] h-[352px] w-[24px] bg-black" />
      <div className="absolute left-[1579px] top-[552px] h-[352px] w-[24px] bg-black" />
      <div className="absolute left-[1354px] top-[668px] h-[22px] w-[389px] bg-black" />
      <div className="absolute left-[1354px] top-[775px] h-[22px] w-[389px] bg-black" />
      <div className="absolute left-[3102px] top-[470px] h-[442px] w-[18px] rounded-[8px] bg-[#dddee1]" />
      <div className="absolute left-[946px] top-[1526px] h-[15px] w-[1197px] rounded-[7px] bg-[#dddee1]" />
    </div>
  );
}

function PageTabs() {
  const c = "flex items-center justify-center border-r-2 border-[#e6e7ea] pt-[6px] text-[26px] leading-[36px] text-[#7c7f82]";
  return (
    <div className="flex h-[75px] border-t-2 border-[#e4e5e7] bg-[#f1f3f4]">
      <div className={c + " w-[62px]"}>
        <Svg className="-mt-[5px] h-[27px] w-[7px]" box="0 0 7 27"><path d="M0 0H6V6H0ZM0 10H6V16H0ZM0 20H6V26H0Z" fill="#777" /></Svg>
      </div>
      <div className={c + " w-[296px]"}><T w={69}>menu</T></div>
      <div className={c + " w-[299px]"}><T w={69}>menu</T></div>
      <div className="flex w-[298px] items-center justify-center border-r-2 border-[#e6e7ea] bg-white pt-[6px] text-[26px] font-bold leading-[36px] text-[#df6c0c]"><T w={163}>singolplayer</T></div>
      <div className={c + " w-[63px]"}>
        <Svg className="-mt-[12px] h-[26px] w-[29px]" box="0 0 29 26"><path d="M14.500 0V26M0 13H29" stroke="#8c8c8c" strokeWidth="5.500" /></Svg>
      </div>
    </div>
  );
}

/* ------------------------------ format panel ------------------------------ */

function Check({ on, label, w, children }) {
  return (
    <div className="flex h-[46.600px] items-center">
      {on ? (
        <Svg className="h-[26px] w-[29px]" box="0 0 29 26"><rect width="29" height="26" rx="4" fill="#0a75ff" /><path d="M5.500 13.500L11.500 18.500L23.500 7" stroke="#fff" strokeWidth="4" /></Svg>
      ) : (
        <div className="h-[26px] w-[29px] shrink-0 rounded-[5px] border-2 border-[#767676] bg-white" />
      )}
      <T w={w} className="ml-[13px] mt-[3px] text-[23.500px] leading-[32px] text-[#757575]">{label}</T>
      {children}
    </div>
  );
}

function Panel() {
  const h = "text-[23.500px] font-bold leading-[32px] text-[#707070]";
  const btn = "flex shrink-0 items-center justify-center rounded-[5px] border-2 border-[#767676] bg-[#efefef] font-['Liberation_Sans'] text-[25px] leading-[32px] text-black";
  return (
    <div className="flex w-[495px] shrink-0 flex-col overflow-hidden border-l-2 border-[#dadce0] bg-[#fbfbfb]">
      <div className="flex h-[66px] shrink-0 text-[25.500px] font-bold leading-[34px] text-[#707070]">
        <div className="flex w-[228px] shrink-0 items-center justify-center pt-[3px]"><T w={110}>Diagram</T></div>
        <div className="flex w-[232px] shrink-0 items-center justify-center border-x-2 border-b-2 border-[#dadce0] bg-[#f1f3f4]"><T w={64}>Style</T></div>
        <div className="flex w-[34px] shrink-0 items-center overflow-hidden border-b-2 border-[#dadce0] bg-[#f1f3f4] pl-[17px]">
          <Svg className="-mt-[6px] h-[17px] w-[20px]" box="0 0 20 17"><path d="M1 1L19 16M19 1L1 16" stroke="#b0c4d8" strokeWidth="4" /></Svg>
        </div>
      </div>
      <div className="h-[284px] shrink-0 border-b-2 border-[#dfe0e2] pl-[29.500px] pt-[30px]">
        <T w={61} className={h}>View</T>
        <div className="mt-[8px]">
          <Check on label="Grid" w={48}>
            <div className="ml-auto flex items-center pr-[9px]">
              <div className="flex h-[41px] w-[103px] items-center justify-end rounded-[6px] border-2 border-[#999] bg-white pr-[3px]"><T w={57} className="font-['Liberation_Sans'] text-[25px] leading-[32px] text-black">10 pt</T></div>
              <div className="flex h-[39px] w-[26px] flex-col items-center justify-between rounded-[5px] border-2 border-[#c4c4c4] py-[5px]">
                <Svg className="h-[8px] w-[18px]" box="0 0 18 8"><path d="M1 7.500H17L9 1Z" fill="#ddd" stroke="#777" strokeWidth="1.500" /></Svg>
                <div className="h-[2px] w-full bg-[#bbb]" />
                <Svg className="h-[8px] w-[18px]" box="0 0 18 8"><path d="M1 0.500H17L9 7Z" fill="#ddd" stroke="#777" strokeWidth="1.500" /></Svg>
              </div>
              <div className="ml-[8px] flex h-[42px] w-[99px] items-center justify-center rounded-[6px] border-2 border-[#767676] bg-[#efefef]"><div className="h-[28px] w-[82px] border-2 border-black bg-[#d0d0d0]" /></div>
            </div>
          </Check>
          <Check on label="Page View" w={117} />
          <Check label="Background" w={135}>
            <div className={btn + " ml-[48px] h-[42px] w-[121px] bg-linear-to-b from-[#f4f4f4] to-[#dedede]"}><T w={90} className="text-[#333]">Change</T></div>
          </Check>
          <Check label="Shadow" w={90} />
        </div>
      </div>
      <div className="h-[278px] shrink-0 border-b-2 border-[#dfe0e2] pl-[29.500px] pt-[24px]">
        <T w={96} className={h}>Options</T>
        <div className="mt-[7px]">
          <Check on label="Connection Arrows" w={218} />
          <Check on label="Connection Points" w={207} />
          <Check on label="Guides" w={78} />
          <Check on label="Autosave" w={105} />
        </div>
      </div>
      <div className="h-[189px] shrink-0 border-b-2 border-[#dfe0e2] pl-[30px] pt-[24px]">
        <T w={124} className={h}>Paper Size</T>
        <div className="mt-[11px] flex h-[35px] w-[443px] items-center rounded-[6px] border-2 border-[#767676] bg-white pl-[10px]">
          <T w={243} className="font-['Liberation_Sans'] text-[25px] leading-[31px] text-black">US-Letter (8,5" x 11")</T>
          <Svg className="ml-auto mr-[9px] h-[12px] w-[21px]" box="0 0 21 12"><path d="M1.500 2L10.500 9.500L19.500 2" stroke="#111" strokeWidth="3.500" /></Svg>
        </div>
        <div className="mt-[13px] flex h-[42px] items-center pl-[19px] text-[23.500px] leading-[32px] text-[#757575]">
          <Svg className="h-[26px] w-[29px]" box="0 0 29 26"><ellipse cx="14.500" cy="13" rx="13.300" ry="11.800" fill="#fff" stroke="#0a75ff" strokeWidth="2.200" /><ellipse cx="14.500" cy="13" rx="8.600" ry="7.800" fill="#0a75ff" /></Svg>
          <T w={84} className="ml-[13px] mt-[6px]">Portrait</T>
          <Svg className="ml-[21px] h-[26px] w-[29px]" box="0 0 29 26"><ellipse cx="14.500" cy="13" rx="13.300" ry="11.800" fill="#fff" stroke="#767676" strokeWidth="2" /></Svg>
          <T w={119} className="ml-[13px] mt-[6px]">Landscape</T>
        </div>
      </div>
      <div className="flex h-[134px] shrink-0 flex-col gap-[4px] border-b-2 border-[#dfe0e2] pl-[30px] pt-[23px]">
        <div className={btn + " h-[39px] w-[452px]"}><T w={127}>Edit Data...</T></div>
        <div className={btn + " h-[39px] w-[452px]"}><T w={215}>Clear Default Style</T></div>
      </div>
    </div>
  );
}

/* ------------------------------ taskbar ------------------------------ */

const TaskApp = ({ children, line, active }) => (
  <div className={"relative flex h-full w-[105.500px] shrink-0 items-center justify-center " + (active ? "bg-[#484a52]" : "")}>
    {children}
    {line && <div className={"absolute bottom-0 h-[4px] bg-[#76b9ed] " + (active ? "inset-x-0" : "inset-x-[9px]")} />}
  </div>
);

function Taskbar() {
  const A = "h-[45px] w-[49px]";
  return (
    <div className="flex h-[80px] shrink-0 flex-col border-t border-[#777] bg-[#1c1e28]">
      <div className="flex h-[77px] shrink-0 items-center text-white">
        <div className="flex w-[93px] shrink-0 items-center justify-center pr-[9px]">
          <Svg className="h-[32px] w-[36px]" box="0 0 36 32"><path d="M0 4L14 2V15H0ZM16 1.800L36 0V15H16ZM0 17H14V30L0 28ZM16 17H36V32L16 30.200Z" fill="#fff" /></Svg>
        </div>
        <div className="flex h-full w-[739px] shrink-0 items-center border-2 border-[#b9b9b9] bg-[#f1f1f1]">
          <Svg className="ml-[24px] h-[32px] w-[36px]" box="0 0 36 32" stroke="#222" strokeWidth="2.600"><ellipse cx="23.500" cy="11.500" rx="11" ry="10" /><path d="M15.500 19L1 30.500" /></Svg>
          <T w={451} className="ml-[24px] text-[29.500px] leading-[40px] text-[#3a3a3a]">Scrivi qui per eseguire la ricerca</T>
        </div>
        <div className="flex h-full shrink-0 items-center">
          <div className="flex w-[105px] items-center justify-center"><Svg className="h-[33px] w-[36px]" box="0 0 36 33"><ellipse cx="18" cy="16.500" rx="15" ry="14" stroke="#fff" strokeWidth="4" /></Svg></div>
          <div className="flex w-[109px] items-center pl-[33px]"><Svg className="h-[30px] w-[36px]" box="0 0 36 30" stroke="#fff" strokeWidth="2.400"><path d="M1.500 8H24V22H1.500ZM1 1V5H25V1M1 29V25H25V29M31.500 0V8M31.500 14V30" /><path d="M29 9H36V14H29Z" fill="#fff" stroke="none" /></Svg></div>
          <TaskApp active line>
            <Svg className={A} box="-25 -23 50 46">
              <g transform="scale(1 .92)"><path d="M0 0L-21.600 -12.500A25 25 0 0 1 21.600 -12.500Z" fill="#e0493e" /><path d="M0 -12.500H21.700A25 25 0 0 1 0 25L11 6Z" fill="#fdd03f" /><path d="M-21.600 -12.500A25 25 0 0 0 0 25L11 6.300L0 0L-11 6.300Z" fill="#1fa05a" /><circle r="12.500" fill="#fff" /><circle r="10" fill="#4a8bf5" /></g>
            </Svg>
          </TaskApp>
          <TaskApp line>
            <Svg className="h-[36px] w-[48px]" box="0 0 48 36"><path d="M0 0H20V8H0Z" fill="#e0a000" /><path d="M0 6H20V2H48V34H0Z" fill="#fed667" /><path d="M9 20H39V36H32V28H16V36H9Z" fill="#2f93d8" /></Svg>
          </TaskApp>
          <TaskApp>
            <div className={"flex items-center justify-center rounded-[50%] bg-linear-to-b from-[#12193f] to-[#137fc0] " + A}>
              <Svg className="h-full w-full" box="0 0 49 45"><circle cx="32" cy="17" r="8" stroke="#fff" strokeWidth="3" /><circle cx="32" cy="17" r="4" stroke="#ddd" strokeWidth="1.500" /><path d="M1 21L14 27L22 24L25 19L36 25L25 29C25 37 13 38 11 32L2 28Z" fill="#fff" /></Svg>
            </div>
          </TaskApp>
          <TaskApp line>
            <Svg className={A} box="0 0 49 45"><ellipse cx="24.500" cy="22.500" rx="24.500" ry="22.500" fill="#6b5536" /><ellipse cx="24.500" cy="22.500" rx="20.500" ry="19" fill="#8e7852" /><ellipse cx="19" cy="15" rx="11" ry="9" fill="#b8a47a" /><path d="M11 9L38 36M38 9L11 36M24.500 3V42M4 22.500H45" stroke="#57452a" strokeWidth="1.800" /><ellipse cx="24.500" cy="22.500" rx="12" ry="11" stroke="#57452a" strokeWidth="1.800" /></Svg>
          </TaskApp>
          <TaskApp><div className={"rounded-[50%] bg-[#111] " + A}><FaSpotify preserveAspectRatio="none" className="h-full w-full text-[#1ed760]" /></div></TaskApp>
          <TaskApp>
            <div className={"flex items-center justify-center rounded-[6px] bg-[#9146ff] " + A}>
              <Svg className="h-[32px] w-[34px]" box="0 0 34 32"><path d="M2 5L9 0H33V18L24 26H19L11 32V26H2Z" fill="#000" /><path d="M10 3H29V16L24 20H20L15 25V20H10Z" fill="#fff" /><path d="M17 6V12M24 6V12" stroke="#000" strokeWidth="2.500" /></Svg>
            </div>
          </TaskApp>
          <TaskApp>
            <div className="flex h-[48px] w-[52px] flex-col rounded-[6px] bg-white">
              <div className="flex h-[24px] items-center justify-center"><T w={33} className="text-[19px] font-bold leading-[22px] text-[#3a3cf0]">sky</T></div>
              <div className="flex h-[24px] w-full items-center justify-center rounded-b-[6px] bg-linear-to-r from-[#0a3cf0] to-[#10c8f8]"><Svg className="h-[12px] w-[12px]" box="0 0 12 12"><path d="M1 0L11 6L1 12Z" fill="#fff" /></Svg></div>
            </div>
          </TaskApp>
          <TaskApp>
            <Svg className="h-[43px] w-[53px]" box="0 0 53 43"><path d="M13 0H53V11H13Z" fill="#41a5ee" /><path d="M13 11H53V22H13Z" fill="#2b7cd3" /><path d="M13 22H53V33H13Z" fill="#185abd" /><path d="M13 32H53V43H13Z" fill="#103f91" /><rect y="9" width="27" height="25" fill="#185abd" /><path d="M5 15L9.500 28L13.500 17L17.500 28L22 15" stroke="#fff" strokeWidth="2.800" /></Svg>
          </TaskApp>
          <TaskApp><Svg className="h-[47px] w-[51px]" box="0 0 51 47" stroke="#e0214b" strokeWidth="2.400"><ellipse cx="25.500" cy="23.500" rx="24" ry="22" /><ellipse cx="25.500" cy="23.500" rx="12" ry="20" /><path d="M16 7C26 -2 40 8 40 23.500S26 49 16 40" /></Svg></TaskApp>
          <TaskApp><div className={"flex items-center justify-center rounded-[50%] bg-[#151515] " + A}><Svg className="h-[30px] w-[34px]" box="0 0 34 30" stroke="#fff" strokeWidth="5"><path d="M17 3C-2 3 -2 27 15 27M16 15H28V26M22 15V20" /></Svg></div></TaskApp>
          <TaskApp><Svg className="h-[36px] w-[48px]" box="0 0 48 36"><path d="M22 0L44 15C52 27 40 36 31 36C20 36 16 28 18 22L4 32L0 28L18 15H4V11H26L19 4Z" fill="#ea7600" /><ellipse cx="31" cy="22.500" rx="10" ry="8.500" fill="#fff" /><ellipse cx="31" cy="22.500" rx="6" ry="5.200" fill="#265787" /></Svg></TaskApp>
        </div>
        <div className="ml-auto flex shrink-0 items-center">
          <Svg className="h-[38px] w-[48px]" box="0 0 48 38"><path d="M20 0C34 8 30 22 6 24C2 22 0 19 1 17C12 20 20 12 20 0Z" fill="#f7b900" /><path d="M14 38C0 38 0 22 12 22C14 8 32 8 34 18C50 16 52 38 36 38Z" fill="#bfe4fb" /><path d="M14 36C20 24 30 18 40 22C46 30 42 36 36 36Z" fill="#e6f5ff" /></Svg>
          <T w={61} className="ml-[22px] mt-[2px] text-[27px] leading-[36px]">12°C</T>
          <T w={127} className="ml-[20px] mt-[2px] text-[27px] leading-[36px]">Nuvoloso</T>
          <Svg className="ml-[36px] h-[14px] w-[26px]" box="0 0 26 14"><path d="M1 13L13 2L25 13" stroke="#fff" strokeWidth="2.400" /></Svg>
          <Svg className="ml-[21px] h-[23px] w-[35px]" box="0 0 35 23" stroke="#fff" strokeWidth="2"><path d="M11 4H32V21H6V14M2 0V5M8 0V5M0 5H10V9Q5 14 0 9ZM34 9V16" /><path d="M13 7H29V18H9V14H13Z" fill="#fff" stroke="none" /></Svg>
          <Svg className="ml-[17px] h-[22px] w-[35px]" box="0 0 35 22"><path d="M9 22C-3 22 -2 8 8 8C12 -3 26 -2 28 7C38 9 36 22 28 22Z" fill="#a9a9ab" /><path d="M6 22L24 9C36 9 38 22 28 22Z" fill="#fff" /><path d="M9 22C4 22 1 19 1 16L10 13L19 22Z" fill="#eee" /></Svg>
          <Svg className="ml-[18px] h-[26px] w-[34px]" box="0 0 34 26" stroke="#fff" strokeWidth="2"><path d="M11 1H33V20H8M18 20V25M11 25H26M1 1H9V9H1ZM5 9V26M5 3V7" /></Svg>
          <Svg className="ml-[17px] h-[28px] w-[35px]" box="0 0 35 28" stroke="#fff" strokeWidth="2"><path d="M1 9H6L13 2V26L6 19H1ZM17 10Q20 14 17 18" /><path d="M22 6Q28 14 22 22M28 1Q38 14 28 27" stroke="#777" /></Svg>
          <div className="-mt-[3px] ml-[22px] flex w-[123px] flex-col items-center text-[23.500px] leading-[35px]">
            <T w={57}>20:41</T>
            <T w={123}>17/02/2022</T>
          </div>
          <div className="relative ml-[39px] mr-[14px] mt-[6px] h-[46px] w-[52px]">
            <Svg className="h-[34px] w-[36px]" box="0 0 36 36"><path d="M0 0H35V26H20L12 34V26H0Z" fill="#fff" /><path d="M6 7H29M6 13H29M6 19H24" stroke="#1c1e28" strokeWidth="2.200" /></Svg>
            <div className="absolute bottom-0 right-0 flex h-[33px] w-[37px] items-center justify-center rounded-[50%] border-2 border-[#777] bg-[#2b2c30]"><T w={14} className="text-[25px] leading-[30px]">4</T></div>
          </div>
        </div>
      </div>
      <div className="flex h-[2px] bg-[#0c0d12]"><div className="ml-[93px] w-[739px] bg-[#e4e4e4]" /></div>
    </div>
  );
}

export default function App() {
  return (
    <div className="flex h-[2048px] w-[4096px] flex-col overflow-hidden bg-[#fbfbfb] font-['Open_Sans','Noto_Sans',sans-serif]">
      <Browser />
      <Header />
      <Toolbar />
      <div className="flex h-[1621px] shrink-0">
        <Sidebar />
        <div className="flex w-[29px] shrink-0 items-center border-r-2 border-[#e2e2e6] bg-[#fbfbfb] pl-[11px]">
          <div className="flex gap-[3px]"><div className="h-[14px] w-[2px] bg-[#555]" /><div className="h-[14px] w-[2px] bg-[#555]" /></div>
        </div>
        <div className="flex w-[3124px] shrink-0 flex-col">
          <Canvas />
          <PageTabs />
        </div>
        <Panel />
      </div>
      <Taskbar />
    </div>
  );
}
